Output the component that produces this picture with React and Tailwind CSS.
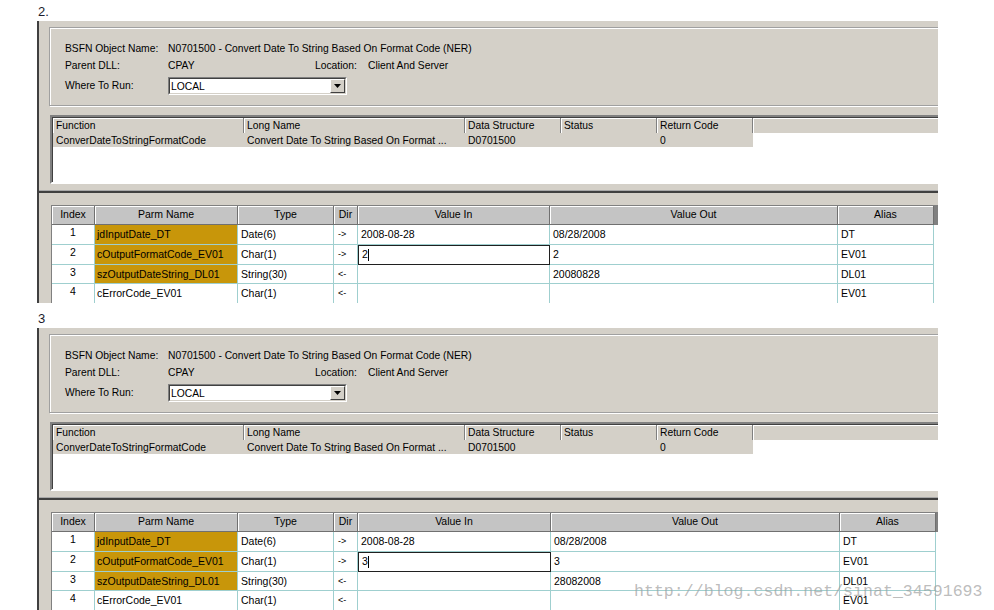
import React from 'react';

const listCols = [
  { name: 'Function', w: 191, v: 'ConverDateToStringFormatCode' },
  { name: 'Long Name', w: 221, v: 'Convert Date To String Based On Format ...' },
  { name: 'Data Structure', w: 96, v: 'D0701500' },
  { name: 'Status', w: 96, v: '' },
  { name: 'Return Code', w: 96, v: '0' },
];

const rowsFor = (code, outStr) => [
  { idx: 1, h: 20, parm: 'jdInputDate_DT', hl: true, type: 'Date(6)', dir: '->', vin: '2008-08-28', vout: '08/28/2008', alias: 'DT' },
  { idx: 2, h: 20, parm: 'cOutputFormatCode_EV01', hl: true, type: 'Char(1)', dir: '->', vin: code, vout: code, alias: 'EV01', focus: true },
  { idx: 3, h: 19, parm: 'szOutputDateString_DL01', hl: true, type: 'String(30)', dir: '<-', vin: '', vout: outStr, alias: 'DL01' },
  { idx: 4, h: 20, parm: 'cErrorCode_EV01', hl: false, type: 'Char(1)', dir: '<-', vin: '', vout: '', alias: 'EV01' },
];

const Combo = () => (
  <div className="w-[179px] h-[18px] flex border border-t-[#808080] border-l-[#808080] border-b-white border-r-white">
    <div className="flex-1 flex bg-white border border-t-[#404040] border-l-[#404040] border-b-[#d4d0c8] border-r-[#d4d0c8]">
      <div className="flex-1 pl-[1px] leading-[15px] text-[10.3px] text-black">LOCAL</div>
      <div className="w-[15px] h-[14px] flex items-center justify-center bg-[#d4d0c8] border border-t-white border-l-white border-b-[#404040] border-r-[#404040]">
        <svg width="7" height="4" viewBox="0 0 7 4"><polygon points="0,0 7,0 3.5,4" fill="#000" /></svg>
      </div>
    </div>
  </div>
);

const Panel = ({ rows, widths }) => {
  const [wIdx, wParm, wType, wDir, wIn, wOut, wAlias] = widths;
  return (
    <div className="ml-[37px] w-[901px] h-[282px] shrink-0 bg-[#d4d0c8] border-l-2 border-[#404040] overflow-hidden">
      {/* header group box */}
      <div className="ml-[10px] mt-[6px] w-[1000px] border border-[#a0a0a0] shadow-[inset_1px_1px_0_#fff,1px_1px_0_#fff] pt-[12px] pl-[15px] pb-[10px] text-[10.3px] text-black">
        <div className="flex h-[17px] items-center">
          <div className="w-[103px]">BSFN Object Name:</div>
          <div>N0701500 - Convert Date To String Based On Format Code (NER)</div>
        </div>
        <div className="flex h-[17px] items-center">
          <div className="w-[103px]">Parent DLL:</div>
          <div className="w-[147px]">CPAY</div>
          <div className="w-[53px]">Location:</div>
          <div>Client And Server</div>
        </div>
        <div className="flex h-[18px] mt-[3px] items-center">
          <div className="w-[103px]">Where To Run:</div>
          <Combo />
        </div>
      </div>

      {/* function list */}
      <div className="ml-[11px] mt-[9px] w-[1000px] h-[69px] bg-white border-2 border-t-[#808080] border-l-[#808080] border-b-white border-r-white shadow-[inset_1px_1px_0_#404040] pl-[1px] pt-[1px] text-[10.3px] text-black">
        <div className="flex h-[15px] bg-[#d4d0c8]">
          {listCols.map((c) => (
            <div key={c.name} style={{ width: c.w }} className="shrink-0 pl-[3px] leading-[15px] border-r border-r-[#808080] shadow-[inset_1px_1px_0_#fff]">
              {c.name}
            </div>
          ))}
          <div className="flex-1 shadow-[inset_1px_1px_0_#fff]" />
        </div>
        <div className="flex h-[14px]">
          {listCols.map((c) => (
            <div key={c.name} style={{ width: c.w }} className="shrink-0 pl-[3px] leading-[15px] bg-[#d4d0c8]">
              {c.v}
            </div>
          ))}
        </div>
      </div>

      {/* separator */}
      <div className="mt-[6px] h-[1px] bg-[#a8a8a8]" />
      <div className="h-[2px] bg-[#404040]" />

      {/* parameter grid */}
      <div className="ml-[12px] mt-[12px] w-[1000px] border-l border-t border-[#808080] text-[10.5px] text-black">
        <div className="flex h-[19px] bg-[#c4c4c4]">
          {[['Index', wIdx], ['Parm Name', wParm], ['Type', wType], ['Dir', wDir], ['Value In', wIn], ['Value Out', wOut], ['Alias', wAlias]].map(([n, w]) => (
            <div key={n} style={{ width: w }} className="shrink-0 text-center leading-[17px] border-r border-b border-[#707070] shadow-[inset_1px_1px_0_#fff]">
              {n}
            </div>
          ))}
          <div className="w-[4px] bg-[#808080]" />
          <div className="flex-1" />
        </div>
        {rows.map((r) => (
          <div key={r.idx} style={{ height: r.h }} className="flex bg-white">
            <div style={{ width: wIdx }} className="shrink-0 text-center leading-[15px] border-r border-b border-[#9fcfcf]">{r.idx}</div>
            <div style={{ width: wParm }} className={`shrink-0 pl-[2px] leading-[18px] border-r border-b border-[#9fcfcf] ${r.hl ? 'bg-[#c8960a]' : ''}`}>{r.parm}</div>
            <div style={{ width: wType }} className="shrink-0 pl-[3px] leading-[18px] border-r border-b border-[#9fcfcf]">{r.type}</div>
            <div style={{ width: wDir }} className="shrink-0 pl-[4px] leading-[18px] border-r border-b border-[#9fcfcf] text-[9px]">{r.dir}</div>
            {r.focus ? (
              <div style={{ width: wIn }} className="shrink-0 pl-[3px] border border-[#202020] flex items-center">
                <span>{r.vin}</span>
                <span className="w-[1px] h-[12px] bg-black" />
              </div>
            ) : (
              <div style={{ width: wIn }} className="shrink-0 pl-[3px] leading-[18px] border-r border-b border-[#9fcfcf]">{r.vin}</div>
            )}
            <div style={{ width: wOut }} className="shrink-0 pl-[3px] leading-[18px] border-r border-b border-[#9fcfcf]">{r.vout}</div>
            <div style={{ width: wAlias }} className="shrink-0 pl-[3px] leading-[18px] border-r border-b border-[#9fcfcf]">{r.alias}</div>
          </div>
        ))}
      </div>
    </div>
  );
};

export default function App() {
  return (
    <div className="relative w-[994px] h-[610px] bg-white overflow-hidden font-['Liberation_Sans',Arial,sans-serif] flex flex-col">
      <div className="h-[21px] pl-[38px] text-[13px] leading-[23px] text-[#1c1c2c]">2.</div>
      <Panel rows={rowsFor('2', '20080828')} widths={[43, 143, 96, 24, 192, 288, 96]} />
      <div className="h-[25px] pl-[38px] pt-[8px] text-[13px] leading-[15px] text-[#1c1c2c]">3</div>
      <Panel rows={rowsFor('3', '28082008')} widths={[43, 143, 96, 24, 193, 289, 96]} />
      <div className="absolute left-[634px] top-[580px] font-['Liberation_Mono',monospace] text-[16.6px] text-[#a0a0a0]/70 whitespace-nowrap">
        http://blog.csdn.net/sinat_34591693
      </div>
    </div>
  );
}
